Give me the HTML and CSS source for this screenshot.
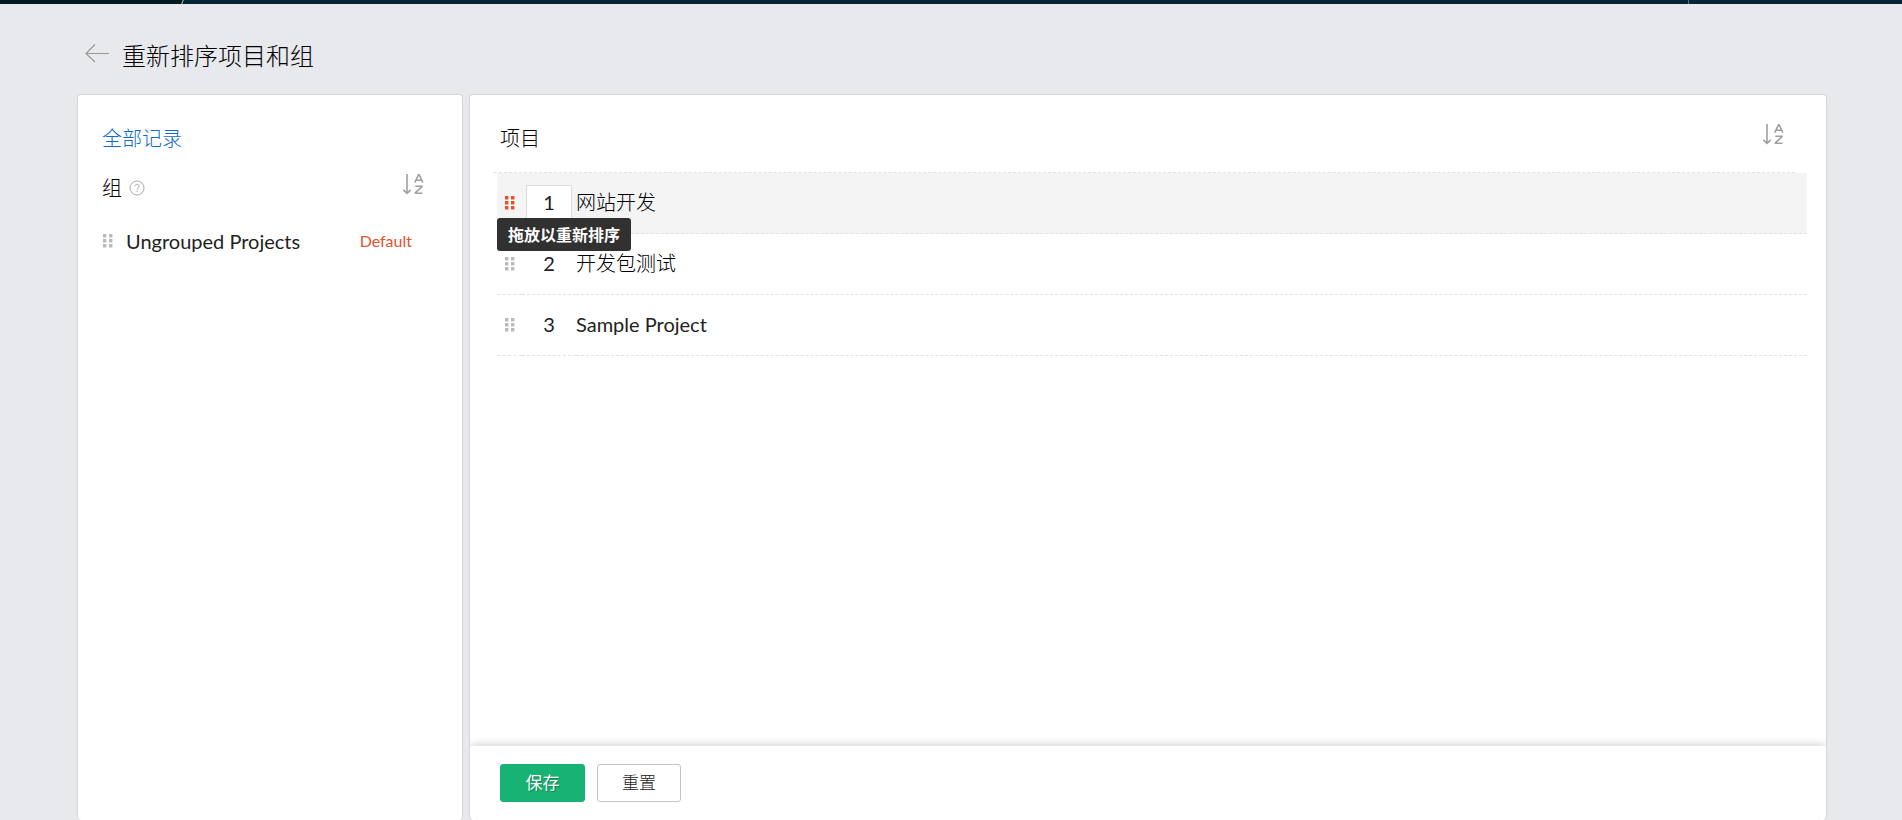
FILE: index.html
```html
<!DOCTYPE html>
<html lang="zh-CN">
<head>
  <meta charset="UTF-8">
  <meta name="viewport" content="width=device-width, initial-scale=1.0">
  <title>重新排序项目和组</title>
  <link rel="stylesheet" href="styles.css">
</head>
<body>
  <svg class="sprite" aria-hidden="true">
    <symbol id="icon-drag" viewBox="0 0 10 14">
      <path d="M0 0h3.400v3.400H0zM6 0h3.400v3.400H6zM0 5h3.400v3.400H0zM6 5h3.400v3.400H6zM0 10h3.400v3.400H0zM6 10h3.400v3.400H6z" fill="currentColor"/>
    </symbol>
    <symbol id="icon-sort" viewBox="0 0 22 22">
      <g fill="none" stroke="currentColor">
        <path d="M5 0v19M1.300 15.800L5 19.300l3.700-3.500" stroke-width="1.600"/>
        <path d="M12.800 8.700L16.500 .700h.600l3.700 8M14.200 6.200h5.200M13.300 12.200h6.700v.500l-6.500 6v.500h6.900" stroke-width="1.600"/>
      </g>
    </symbol>
  </svg>

  <nav class="topbar">
    <div class="topbar-logo"></div>
    <div class="topbar-tools"></div>
  </nav>

  <header class="page-header">
    <a class="back" href="#" aria-label="返回">
      <svg width="24" height="20" viewBox="0 0 24 20" fill="none" stroke="currentColor" stroke-width="1.200">
        <path d="M24 10.500H1M10 1.500L1 10.500l9 8.500"/>
      </svg>
    </a>
    <h1>重新排序项目和组</h1>
  </header>

  <main class="panels">
    <aside class="panel groups">
      <a class="all-records" href="#">全部记录</a>
      <div class="groups-head">
        <h2>组</h2>
        <svg class="help" width="16" height="16" viewBox="0 0 16 16" fill="none" stroke="currentColor">
          <circle cx="8" cy="8" r="7"/>
          <path d="M5.800 6.300c0-1.300 1-2 2.200-2s2.200.700 2.200 1.900c0 1.500-2.100 1.500-2.100 3.300M8.100 10.700v1.300"/>
        </svg>
        <button class="sort" type="button" aria-label="排序组"><svg><use href="#icon-sort"/></svg></button>
      </div>
      <div class="group-item">
        <svg class="drag"><use href="#icon-drag"/></svg>
        <span class="group-name">Ungrouped Projects</span>
        <span class="group-tag">Default</span>
      </div>
    </aside>

    <section class="panel projects">
      <div class="projects-head">
        <h2>项目</h2>
        <button class="sort" type="button" aria-label="排序项目"><svg><use href="#icon-sort"/></svg></button>
      </div>
      <div class="projects-body">
        <table>
          <tr class="active">
            <td class="cell-drag">
              <svg class="drag"><use href="#icon-drag"/></svg>
              <div class="tooltip">拖放以重新排序</div>
            </td>
            <td class="cell-order"><input type="text" value="1" aria-label="网站开发"></td>
            <td class="cell-name">网站开发</td>
          </tr>
          <tr>
            <td class="cell-drag"><svg class="drag"><use href="#icon-drag"/></svg></td>
            <td class="cell-order"><input type="text" value="2" aria-label="开发包测试"></td>
            <td class="cell-name">开发包测试</td>
          </tr>
          <tr>
            <td class="cell-drag"><svg class="drag"><use href="#icon-drag"/></svg></td>
            <td class="cell-order"><input type="text" value="3" aria-label="Sample Project"></td>
            <td class="cell-name" lang="en">Sample Project</td>
          </tr>
        </table>
      </div>
      <footer class="actions">
        <button class="btn btn-save" type="button">保存</button>
        <button class="btn" type="button">重置</button>
      </footer>
    </section>
  </main>
</body>
</html>
```
FILE: styles.css
```css
* {
  box-sizing: border-box;
}

body {
  display: flex;
  flex-direction: column;
  height: 100vh;
  margin: 0;
  font-family: Lato, "Noto Sans CJK SC", sans-serif;
  font-size: 20px;
  font-weight: 400;
  line-height: 28px;
  color: #000;
  background: #e8e9ed;
}

h1,
h2 {
  margin: 0;
  font-size: 20px;
  font-weight: 300;
}

button,
input {
  font: inherit;
  color: inherit;
}

.sprite {
  position: absolute;
  width: 0;
  height: 0;
}

/* top bar */
.topbar {
  display: flex;
  justify-content: space-between;
  flex: none;
  height: 4px;
  background: #002536;
}

.topbar-logo {
  width: 183px;
  background: #00191e;
  border-right: 1px solid #c5cdd0;
  transform: skewX(-20deg);
  transform-origin: left;
}

.topbar-tools {
  width: 214px;
  border-left: 1px solid #5c7280;
}

/* title */
.page-header {
  display: flex;
  align-items: center;
  flex: none;
  gap: 13px;
  height: 90px;
  padding: 0 4%;
}

.page-header h1 {
  font-size: 24px;
  line-height: 36px;
  padding-top: 14px;
}

.back {
  margin-left: 9px;
  padding-top: 8px;
  color: #999;
}

.back svg {
  display: block;
}

/* panels */
.panels {
  display: flex;
  gap: 6px;
  flex: 1;
  min-height: 0;
  padding: 0 75px 0 77px;
}

.panel {
  background: #fff;
  border: 1px solid #d5d6d8;
  border-bottom: none;
  border-radius: 4px;
}

.groups {
  flex: none;
  width: 386px;
  padding: 29px 38px 0 24px;
}

.all-records {
  display: block;
  font-weight: 300;
  color: #0f6bd0;
  text-decoration: none;
}

.groups-head {
  display: flex;
  align-items: center;
  gap: 7px;
  margin: 22px 0 25px;
}

.help {
  color: #aaa;
}

.sort {
  margin-left: auto;
  padding: 0;
  border: none;
  background: none;
  color: #a0a0a0;
  cursor: pointer;
}

.sort svg {
  display: block;
  width: 22px;
  height: 22px;
  margin-bottom: 6px;
}

.drag {
  display: block;
  width: 10px;
  height: 14px;
  color: #bbb;
  cursor: move;
}

.group-item {
  display: flex;
  align-items: center;
  padding: 0 12px 0 1px;
}

.group-name {
  color: #222;
}

.group-item .drag {
  margin-right: 13px;
}

.group-tag {
  margin-left: auto;
  font-size: 16px;
  color: #e1532a;
}

.projects {
  display: flex;
  flex-direction: column;
  flex: 1;
}

.projects-head {
  display: flex;
  align-items: center;
  height: 78px;
  margin: 0 31px 0 24px;
  padding: 8px 11px 0 6px;
  border-bottom: 1px dashed #e2e2e2;
}

.projects-body {
  flex: 1;
  padding: 0 19px 0 27px;
}

table {
  width: 100%;
  border-collapse: separate;
  border-spacing: 0;
}

td {
  height: 61px;
  padding: 0 4px;
  border-bottom: 1px dashed #e2e2e2;
}

.active td {
  background: #f4f4f4;
}

.active .drag {
  color: #e8502a;
}

.cell-drag {
  position: relative;
  width: 25px;
  padding-left: 8px;
}

.cell-order {
  width: 50px;
}

.cell-name {
  padding: 0 0 2px;
  font-weight: 300;
}

.cell-name:lang(en) {
  font-weight: 400;
  color: #222;
}

.cell-order input {
  display: block;
  width: 46px;
  height: 36px;
  padding: 0 0 2px;
  border: 1px solid transparent;
  background: transparent;
  color: #222;
  text-align: center;
}

.active input {
  border-color: #ddd;
  background: #fff;
}

.tooltip {
  position: absolute;
  top: 45px;
  left: 0;
  z-index: 1;
  padding: 0 11px;
  border-radius: 3px;
  background: rgba(38, 38, 38, 0.95);
  color: #fff;
  font-size: 16px;
  font-weight: 700;
  line-height: 33px;
  white-space: nowrap;
}

.actions {
  display: flex;
  gap: 12px;
  padding: 18px 30px;
  border-radius: 0 0 4px 4px;
  box-shadow: 0 -1px 8px rgba(0, 0, 0, 0.2);
  clip-path: inset(-12px 0 0 0);
}

.btn {
  width: 84px;
  height: 38px;
  padding: 0;
  border: 1px solid #c4c4c4;
  border-radius: 3px;
  background: #fff;
  color: #222;
  font-size: 17px;
  font-weight: 300;
  cursor: pointer;
}

.btn-save {
  width: 85px;
  border-color: #17b374;
  background: #17b374;
  color: #fff;
  font-weight: 400;
  text-shadow: 1px 1px 1px rgba(0, 0, 0, 0.3);
}
```
